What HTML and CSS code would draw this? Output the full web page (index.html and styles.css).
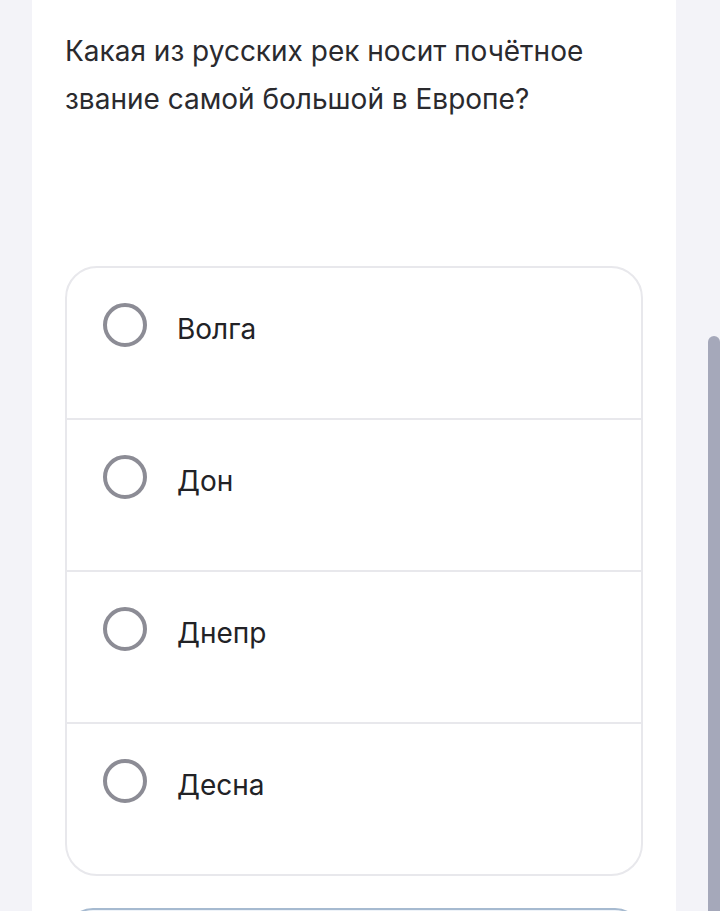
FILE: index.html
```html
<!DOCTYPE html>
<html lang="ru">
<head>
<meta charset="utf-8">
<title>Вопрос</title>
<link rel="stylesheet" href="styles.css">
</head>
<body>
<main class="card">
  <h1 class="question">Какая из русских рек носит почётное звание самой большой в Европе?</h1>
  <div class="options">
    <label class="option"><span class="radio"></span><span class="label">Волга</span></label>
    <label class="option"><span class="radio"></span><span class="label">Дон</span></label>
    <label class="option"><span class="radio"></span><span class="label">Днепр</span></label>
    <label class="option"><span class="radio"></span><span class="label">Десна</span></label>
  </div>
  <button class="submit" type="button" aria-label="Ответить"></button>
</main>
<div class="scrollbar"></div>
</body>
</html>
```
FILE: styles.css
```css
html, body {
  margin: 0;
  padding: 0;
  height: 911px;
  overflow: hidden;
}
body {
  background: #f3f3f8;
  font-family: Inter, "Noto Sans", sans-serif;
  color: #242428;
}
.card {
  margin-left: 32px;
  width: 644px;
  box-sizing: border-box;
  background: #ffffff;
  padding: 27px 33px 0 33px;
  min-height: 1200px;
}
.question {
  margin: 0;
  font-size: 28px;
  font-weight: 400;
  line-height: 48px;
  color: #2a2a2e;
  width: 560px;
}
.options {
  margin-top: 143px;
  border: 2px solid #e8e8ec;
  border-radius: 32px;
  display: flex;
  flex-direction: column;
}
.option {
  height: 115px;
  display: flex;
  align-items: flex-start;
  padding: 35px 36px 0 36px;
  border-top: 2px solid #e8e8ec;
}
.option:first-child {
  border-top: none;
}
.radio {
  width: 44px;
  height: 44px;
  box-sizing: border-box;
  border: 4px solid #8c8c95;
  border-radius: 50%;
  flex: none;
}
.label {
  margin-left: 30px;
  margin-top: 9px;
  font-size: 28px;
  line-height: 34px;
  color: #222226;
}
.submit {
  display: block;
  width: 100%;
  margin-top: 32px;
  height: 64px;
  border: 2px solid #a6bad0;
  border-radius: 28px;
  background: #eef3f9;
}
.scrollbar {
  position: fixed;
  right: 0;
  top: 336px;
  width: 12px;
  height: 600px;
  background: #a5a8ba;
  border-radius: 6px 6px 0 0;
}
```
